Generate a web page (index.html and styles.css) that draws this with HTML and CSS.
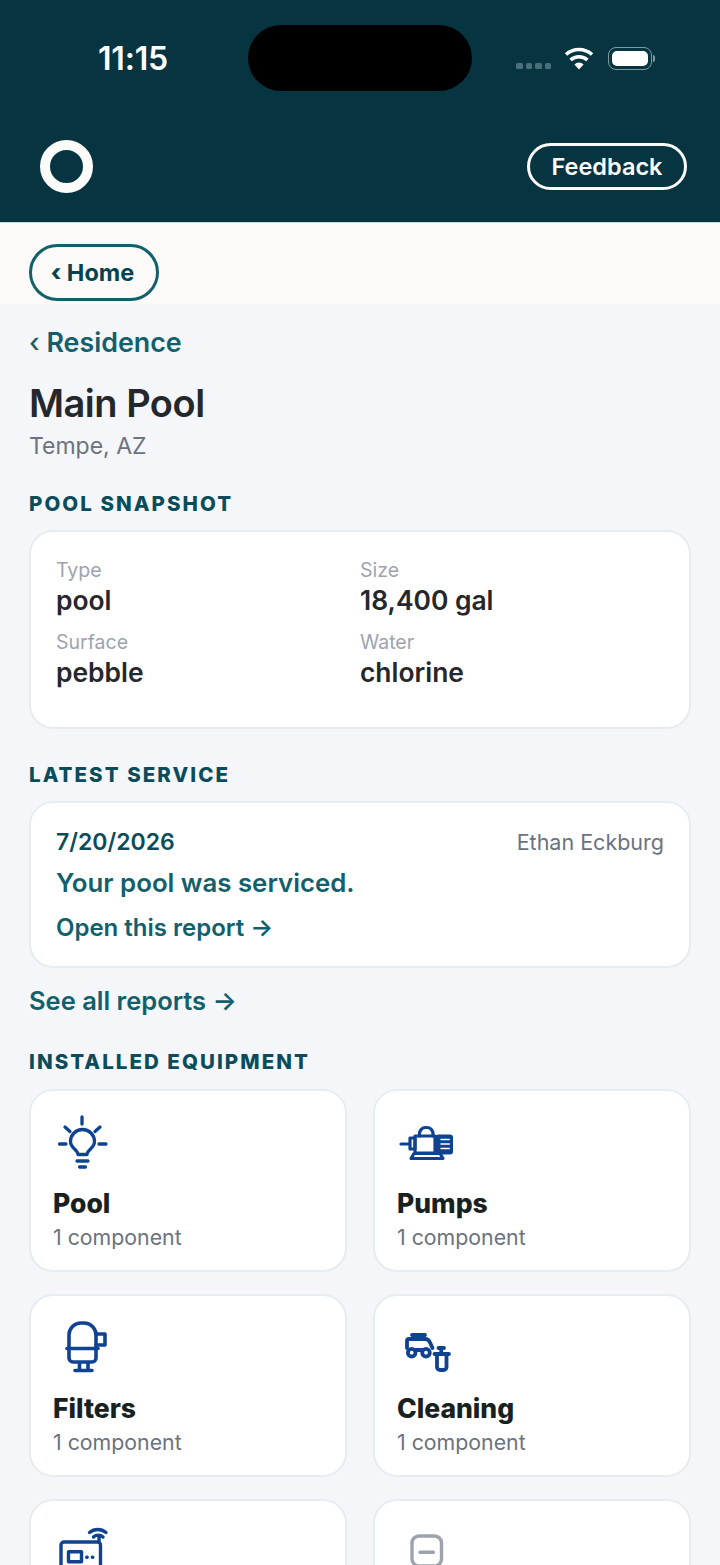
FILE: index.html
```
<!DOCTYPE html>
<html lang="en">
<head>
<meta charset="utf-8">
<title>Main Pool</title>
<link rel="stylesheet" href="styles.css">
</head>
<body>
<div class="screen">
  <header class="top">
    <div class="status">
      <span class="time">11:15</span>
      <div class="island"></div>
      <div class="sys">
        <div class="dots"><i></i><i></i><i></i><i></i></div>
        <svg class="wifi" width="30" height="24" viewBox="0 0 30 24"><path d="M15 23.500 10.400 18.400a6.800 6.800 0 0 1 9.200 0Z" fill="#fff"/><path d="M6.600 14a12.400 12.400 0 0 1 16.800 0" fill="none" stroke="#fff" stroke-width="3.600"/><path d="M2 8.500a19.200 19.200 0 0 1 26 0" fill="none" stroke="#fff" stroke-width="3.600"/></svg>
        <div class="battery"><div class="charge"></div></div>
        <div class="nub"></div>
      </div>
    </div>
    <div class="brand-row">
      <div class="ring"></div>
      <button class="feedback">Feedback</button>
    </div>
  </header>
  <div class="strip"><button class="home"><span class="chev">‹</span> Home</button></div>
  <main class="main">
    <a class="back"><span class="chev-thin">‹</span> Residence</a>
    <h1 class="title">Main Pool</h1>
    <p class="loc">Tempe, AZ</p>

    <h2 class="section first">POOL SNAPSHOT</h2>
    <section class="card snapshot">
      <div class="fact"><span class="lbl">Type</span><span class="val">pool</span></div>
      <div class="fact"><span class="lbl">Size</span><span class="val">18,400 gal</span></div>
      <div class="fact"><span class="lbl">Surface</span><span class="val">pebble</span></div>
      <div class="fact"><span class="lbl">Water</span><span class="val">chlorine</span></div>
    </section>

    <h2 class="section latest">LATEST SERVICE</h2>
    <section class="card service">
      <div class="svc-head"><span class="date">7/20/2026</span><span class="tech">Ethan Eckburg</span></div>
      <p class="msg">Your pool was serviced.</p>
      <a class="open">Open this report →</a>
    </section>
    <a class="all">See all reports →</a>

    <h2 class="section equip">INSTALLED EQUIPMENT</h2>
    <div class="grid">
      <article class="card tile">
        <svg class="ico" width="56" height="56" viewBox="0 0 56 56" fill="none" stroke="#0f4391" stroke-width="3.300" stroke-linecap="round" stroke-linejoin="round"><path d="M29 2v7M12 12l5 4.500M47 12l-5 4.500M6.500 29H13M46 29h7"/><path d="M25 39.500c0-5-7.500-6-7.500-13a12 12 0 0 1 24 0c0 7-7.500 8-7.500 13Z"/><path d="M24 46h11M26.500 52h6"/></svg>
        <h3>Pool</h3><p>1 component</p>
      </article>
      <article class="card tile">
        <svg class="ico" width="56" height="56" viewBox="0 0 56 56" fill="none" stroke="#0f4391" stroke-width="3.200" stroke-linecap="round" stroke-linejoin="round"><path d="M4 29h8"/><path d="M13 23h5v11h-5Z"/><path d="M18 21h20v17H18Z"/><path d="M22.500 21v-2.500a6 6 0 0 1 6-6h1.500a6 6 0 0 1 6 6V21"/><rect x="40" y="21" width="14.500" height="17" rx="1.500" fill="#0f4391"/><path d="M44 24.500h8.300M44 29h8.300M44 33.500h8.300" stroke="#fff" stroke-width="1.500"/><path d="M14 43.500l3-5h26l3 5Z"/></svg>
        <h3>Pumps</h3><p>1 component</p>
      </article>
      <article class="card tile">
        <svg class="ico" width="56" height="56" viewBox="0 0 56 56" fill="none" stroke="#0f4391" stroke-width="3.600" stroke-linecap="round" stroke-linejoin="round"><path d="M16 15a12 12 0 0 1 12-12h3a12 12 0 0 1 12 12v23a4 4 0 0 1-4 4H20a4 4 0 0 1-4-4Z"/><path d="M14 28.500h31"/><path d="M43 14h9v11h-9"/><path d="M26.500 43v7M35 43v7M22 50.500h17"/></svg>
        <h3>Filters</h3><p>1 component</p>
      </article>
      <article class="card tile">
        <svg class="ico" width="56" height="56" viewBox="0 0 56 56" fill="none" stroke="#0f4391" stroke-width="3.800" stroke-linecap="round" stroke-linejoin="round"><path d="M15 15h13"/><path d="M10 28v-7a2 2 0 0 1 2-2h16.500c2 0 3.500 1.500 4.500 3.500l2.500 5.500"/><circle cx="14.700" cy="32.700" r="3.800"/><circle cx="29" cy="32.700" r="3.800"/><path d="M18.500 30h7"/><path d="M41.500 28h5.500M44.200 28v5M37.500 34h14.500M40 34v13a3 3 0 0 0 3 3h3.500a3 3 0 0 0 3-3V34"/></svg>
        <h3>Cleaning</h3><p>1 component</p>
      </article>
      <article class="card tile">
        <svg class="ico" width="56" height="56" viewBox="0 0 56 56" fill="none" stroke="#0f4391" stroke-width="3.400" stroke-linecap="round" stroke-linejoin="round"><path d="M47.500 60V20a3 3 0 0 0-3-3H11a3 3 0 0 0-3 3v40"/><rect x="15.500" y="26.700" width="13" height="10"/><path d="M33.700 32.300h.5M39.300 32.300h.5M46 17v-6M36.500 7.500a13 13 0 0 1 16.500 0M40.500 12a7 7 0 0 1 9.500 0"/></svg>
      </article>
      <article class="card tile">
        <svg class="ico" width="56" height="56" viewBox="0 0 56 56" fill="none" stroke="#9ca3af" stroke-width="3.400" stroke-linecap="round" stroke-linejoin="round"><rect x="15" y="11" width="29.500" height="30" rx="7"/><path d="M23 27.300h13.300"/></svg>
      </article>
    </div>
  </main>
</div>
</body>
</html>
```
FILE: styles.css
```
* { box-sizing: border-box; }
html, body { margin: 0; padding: 0; height: 1565px; overflow: hidden; }
body { font-family: Inter, "Noto Sans", sans-serif; background: #f4f6fa; color: #24272b; }
h1, h2, h3, p { margin: 0; font-weight: inherit; }
button { font-family: inherit; background: none; cursor: pointer; }

.screen { width: 720px; height: 1565px; overflow: hidden; display: flex; flex-direction: column; }

.top { height: 223px; flex: none; background: #063441; border-bottom: 1px solid #c6d5d8; }
.status { height: 118px; padding: 25px 63px 0 98px; display: flex; align-items: flex-start; }
.time { width: 150px; height: 66px; line-height: 67px; font-size: 32px; font-weight: 600; letter-spacing: -0.2px; color: #fff; }
.island { width: 224px; height: 66px; border-radius: 33px; background: #000; }
.sys { flex: 1; height: 66px; display: flex; align-items: center; padding-left: 44px; }
.dots { display: flex; gap: 3px; margin: 16px 13px 0 0; }
.dots i { width: 6.500px; height: 6.500px; border-radius: 1.500px; background: #49707a; }
.wifi { margin-right: 14px; flex: none; }
.battery { width: 44px; height: 23px; flex: none; padding: 3px; border: 1.500px solid #7f9ba2; border-radius: 8px; margin-right: 1px; }
.charge { height: 100%; background: #fff; border-radius: 5px; }
.nub { width: 2px; height: 7px; background: #7f9ba2; border-radius: 0 2px 2px 0; }

.brand-row { height: 103px; padding: 0 33px 0 40px; display: flex; align-items: flex-start; justify-content: space-between; }
.ring { width: 53px; height: 53px; margin-top: 22px; border-radius: 50%; border: 10px solid #fbfbfa; }
.feedback { width: 160px; height: 47px; margin-top: 25px; padding: 0; border: 3px solid #fbfbfa; border-radius: 24px; color: #fff; font-size: 23.500px; font-weight: 600; }

.strip { height: 81px; flex: none; background: #fbfaf8; padding: 21px 0 0 29px; }
.home { width: 130px; height: 57px; padding: 0 3px 0 0; border: 3px solid #135f6c; border-radius: 29px; color: #07434f; font-size: 23.500px; font-weight: 700; }
.chev { font-weight: 800; }
.chev-thin { font-weight: 500; }

.main { flex: 1; padding: 22px 29px 0; }
.back { display: block; height: 32px; line-height: 32px; font-size: 26.800px; font-weight: 600; color: #135f6c; }
.title { margin-top: 22px; height: 46px; line-height: 46px; font-size: 38px; font-weight: 600; letter-spacing: -0.5px; color: #24272b; }
.loc { margin-top: 6px; height: 28px; line-height: 28px; font-size: 23px; color: #6b7280; }
.section { height: 26px; line-height: 26px; font-size: 20.500px; font-weight: 800; letter-spacing: 2.050px; color: #0b4c5a; }
.section.first { margin-top: 31px; }
.section.latest { margin-top: 33px; }
.section.equip { margin-top: 32px; }

.card { background: #fff; border: 2px solid #e6edf0; border-radius: 24px; }
.snapshot { margin-top: 13px; height: 199px; padding: 26px 25px 0; display: grid; grid-template-columns: 304px 1fr; grid-auto-rows: 72px; }
.fact { display: flex; flex-direction: column; }
.lbl { height: 24px; line-height: 24px; font-size: 19.500px; color: #9ca3af; }
.val { height: 36px; line-height: 36px; font-size: 26.400px; font-weight: 600; color: #24272b; }

.service { margin-top: 13px; height: 167px; padding: 24px 25px 0; }
.svc-head { display: flex; justify-content: space-between; align-items: center; height: 30px; }
.date { font-size: 23px; font-weight: 600; color: #0b4c5a; }
.tech { font-size: 21.500px; color: #6b7280; }
.msg { margin-top: 9px; height: 34px; line-height: 34px; font-size: 25.800px; font-weight: 600; color: #135f6c; }
.open { display: block; margin-top: 13px; height: 30px; line-height: 30px; font-size: 24px; font-weight: 600; color: #135f6c; }
.all { display: block; margin-top: 17px; height: 32px; line-height: 32px; font-size: 25.500px; font-weight: 600; color: #135f6c; }

.grid { margin-top: 14px; display: grid; grid-template-columns: 318px 318px; column-gap: 26px; row-gap: 22px; grid-auto-rows: 183px; }
.tile { padding: 23px 22px 0; }
.ico { display: block; height: 56px; margin-top: 1px; }
.tile h3 { margin-top: 15px; height: 34px; line-height: 34px; font-size: 26.500px; font-weight: 800; color: #17211f; }
.tile p { margin-top: 2px; height: 30px; line-height: 30px; font-size: 21.300px; color: #6b7280; }
```
